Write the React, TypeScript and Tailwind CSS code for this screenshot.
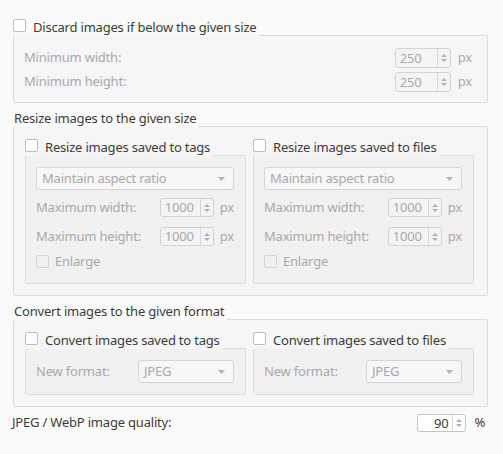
import type { ReactNode } from 'react';

const Check = ({ disabled = false }: { disabled?: boolean }) => (
  <span
    className={`block h-[13px] w-[13px] shrink-0 rounded-[2px] border ${
      disabled ? 'border-[#d4d4d4] bg-[#f1f1f1]' : 'border-[#bdbdbd] bg-white'
    }`}
  />
);

const Arrows = () => (
  <div className="flex w-[13px] flex-col items-center justify-center gap-[2px] border-l border-[#d8d8d8]">
    <svg width="6" height="3" viewBox="0 0 6 3">
      <path d="M3 0 L6 3 L0 3 Z" fill="#b0b0b0" />
    </svg>
    <svg width="6" height="3" viewBox="0 0 6 3">
      <path d="M0 0 L6 0 L3 3 Z" fill="#b0b0b0" />
    </svg>
  </div>
);

const SpinBox = ({
  value,
  size,
  disabled = true,
  right = false
}: {
  value: string;
  size: string;
  disabled?: boolean;
  right?: boolean;
}) => (
  <div
    className={`flex ${size} items-stretch rounded-[3px] border ${
      disabled ? 'border-[#d3d3d3] bg-[#f4f4f4] text-[#a9a9a9]' : 'border-[#c6c6c6] bg-white text-[#3c3c3c]'
    }`}
  >
    <div className={`flex flex-1 items-center px-[4px] leading-none ${right ? 'justify-end' : ''}`}>{value}</div>
    <Arrows />
  </div>
);

const Combo = ({ label, size }: { label: string; size: string }) => (
  <div
    className={`flex ${size} h-[23px] items-center justify-between rounded-[3px] border border-[#d6d6d6] bg-[#f7f7f7] pl-[5px] pr-[8px] text-[#a9a9a9]`}
  >
    <span>{label}</span>
    <svg width="7" height="4" viewBox="0 0 7 4">
      <path d="M0 0 L7 0 L3.5 4 Z" fill="#b3b3b3" />
    </svg>
  </div>
);

const Title = ({ children, bg }: { children: ReactNode; bg: string }) => (
  <div className={`relative z-10 -mb-px flex h-[17px] w-fit items-start gap-[7px] pr-[3px] leading-[17px] ${bg}`}>
    {children}
  </div>
);

const SizeRow = ({ label, mt }: { label: string; mt: string }) => (
  <div className={`flex h-[19px] items-center justify-between ${mt}`}>
    <span className="text-[#a9a9a9]">{label}</span>
    <div className="flex items-center gap-[6px]">
      <SpinBox value="1000" size="h-[19px] w-[54px]" />
      <span className="text-[#a9a9a9]">px</span>
    </div>
  </div>
);

const ResizeColumn = ({ title }: { title: string }) => (
  <div className="w-[221px]">
    <Title bg="bg-[#f6f6f6]">
      <Check />
      <span>{title}</span>
    </Title>
    <div className="h-[129px] rounded-[2px] border border-[#dcdcdc] bg-[#f1f1f1] pl-[10px] pr-[11px] pt-[11px]">
      <Combo label="Maintain aspect ratio" size="w-full" />
      <SizeRow label="Maximum width:" mt="mt-[8px]" />
      <SizeRow label="Maximum height:" mt="mt-[10px]" />
      <div className="mt-[9px] flex h-[13px] items-center gap-[6px]">
        <Check disabled />
        <span className="text-[#a9a9a9]">Enlarge</span>
      </div>
    </div>
  </div>
);

const ConvertColumn = ({ title }: { title: string }) => (
  <div className="w-[221px]">
    <Title bg="bg-[#f6f6f6]">
      <Check />
      <span>{title}</span>
    </Title>
    <div className="flex h-[47px] items-start rounded-[2px] border border-[#dcdcdc] bg-[#f1f1f1] pl-[10px] pt-[11px]">
      <span className="w-[102px] leading-[23px] text-[#a9a9a9]">New format:</span>
      <Combo label="JPEG" size="w-[96px]" />
    </div>
  </div>
);

const MinRow = ({ label }: { label: string }) => (
  <div className="flex h-[20px] items-center justify-between">
    <span className="text-[#a9a9a9]">{label}</span>
    <div className="flex items-center gap-[7px]">
      <SpinBox value="250" size="h-[20px] w-[56px]" />
      <span className="text-[#a9a9a9]">px</span>
    </div>
  </div>
);

export default function App() {
  return (
    <div className="h-[454px] w-[503px] overflow-hidden bg-[#fafafa] pl-[13px] pt-[19px] font-['Noto_Sans',sans-serif] text-[13px] tracking-[-0.2px] text-[#3c3c3c]">
      <Title bg="bg-[#fafafa]">
        <Check />
        <span>Discard images if below the given size</span>
      </Title>
      <div className="flex h-[68px] w-[475px] flex-col gap-[4px] rounded-[2px] border border-[#dcdcdc] bg-[#f6f6f6] pl-[10px] pr-[15px] pt-[12px]">
        <MinRow label="Minimum width:" />
        <MinRow label="Minimum height:" />
      </div>

      <div className="mt-[7px] pl-[1px]">
        <Title bg="bg-[#fafafa]">
          <span>Resize images to the given size</span>
        </Title>
      </div>
      <div className="flex h-[170px] w-[475px] gap-[7px] rounded-[2px] border border-[#dcdcdc] bg-[#f6f6f6] pl-[11px] pt-[12px]">
        <ResizeColumn title="Resize images saved to tags" />
        <ResizeColumn title="Resize images saved to files" />
      </div>

      <div className="mt-[7px] pl-[1px]">
        <Title bg="bg-[#fafafa]">
          <span>Convert images to the given format</span>
        </Title>
      </div>
      <div className="flex h-[88px] w-[475px] gap-[7px] rounded-[2px] border border-[#dcdcdc] bg-[#f6f6f6] pl-[11px] pt-[12px]">
        <ConvertColumn title="Convert images saved to tags" />
        <ConvertColumn title="Convert images saved to files" />
      </div>

      <div className="-ml-px mt-[7px] flex h-[18px] w-[476px] items-center justify-between pr-[3px]">
        <span>JPEG / WebP image quality:</span>
        <div className="flex items-center gap-[8px]">
          <SpinBox value="90" size="h-[18px] w-[49px]" disabled={false} right />
          <span>%</span>
        </div>
      </div>
    </div>
  );
}
